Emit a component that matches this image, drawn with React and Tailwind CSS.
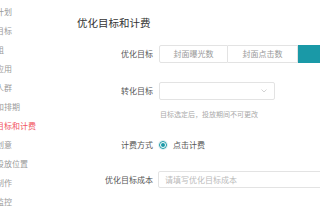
import React from "react";

const items = [
  ["推广计划", false],
  ["推广目标", false],
  ["推广组", false],
  ["选择应用", false],
  ["定向人群", false],
  ["预算和排期", false],
  ["优化目标和计费", true],
  ["广告创意", false],
  ["选择投放位置", false],
  ["创意制作", false],
  ["数据监控", false],
];

export default function App() {
  return (
    <div
      className="flex w-[320px] h-[224px] overflow-hidden bg-white"
      style={{ fontFamily: '"Noto Sans CJK SC", "Noto Sans", sans-serif' }}
    >
      <div className="w-[60px] shrink-0 overflow-hidden pt-[2px]">
        {items.map(([t, a]) => (
          <div
            key={t}
            className={`-ml-[20px] h-[19px] leading-[19px] text-[8px] whitespace-nowrap ${
              a ? "text-[#f25462]" : "text-[#9a9a9a]"
            }`}
          >
            {t}
          </div>
        ))}
      </div>
      <div className="flex-1 min-w-0 overflow-hidden pl-[17px] pt-[16px]">
        <div className="h-[14px] leading-[14px] text-[10.5px] text-[#333] whitespace-nowrap">
          优化目标和计费
        </div>

        <div className="mt-[15px] flex items-center h-[18px]">
          <div className="w-[76px] shrink-0 text-right text-[8px] text-[#555]">优化目标</div>
          <div className="ml-[6px] flex h-[18px] shrink-0">
            <div className="w-[69px] flex items-center justify-center border border-[#e3e3e3] rounded-l-[2px] text-[8px] text-[#999]">
              封面曝光数
            </div>
            <div className="w-[70px] flex items-center justify-center border-y border-r border-[#e3e3e3] text-[8px] text-[#999]">
              封面点击数
            </div>
            <div className="w-[70px] bg-[#1a99a7]" />
          </div>
        </div>

        <div className="mt-[19px] flex items-center h-[18px]">
          <div className="w-[76px] shrink-0 text-right text-[8px] text-[#555]">转化目标</div>
          <div className="ml-[6px] w-[116px] h-[18px] shrink-0 border border-[#e3e3e3] rounded-[2px] flex items-center justify-end pr-[7px]">
            <svg width="6" height="4" viewBox="0 0 6 4" fill="none">
              <path d="M0.5 0.5 L3 3 L5.5 0.5" stroke="#c8c8c8" strokeWidth="0.8" />
            </svg>
          </div>
        </div>
        <div className="mt-[10px] ml-[83px] h-[9px] leading-[9px] text-[7px] text-[#aaa] whitespace-nowrap">
          目标选定后，投放期间不可更改
        </div>

        <div className="mt-[21px] flex items-center h-[10px]">
          <div className="w-[76px] shrink-0 text-right text-[8px] text-[#555]">计费方式</div>
          <div className="ml-[6px] flex items-center">
            <div className="w-[8px] h-[8px] rounded-full border border-[#1a99a7] flex items-center justify-center shadow-[0_0_0_1px_#dff0f2]">
              <div className="w-[4px] h-[4px] rounded-full bg-[#1a99a7]" />
            </div>
            <div className="ml-[6px] text-[8px] text-[#555] whitespace-nowrap">点击计费</div>
          </div>
        </div>

        <div className="mt-[21px] flex items-center h-[17px]">
          <div className="w-[76px] shrink-0 text-right text-[8px] text-[#555]">优化目标成本</div>
          <div className="ml-[5px] w-[200px] h-[17px] shrink-0 border border-[#e3e3e3] rounded-[2px] flex items-center pl-[6px] text-[8px] text-[#bbb] whitespace-nowrap">
            请填写优化目标成本
          </div>
        </div>
      </div>
    </div>
  );
}
